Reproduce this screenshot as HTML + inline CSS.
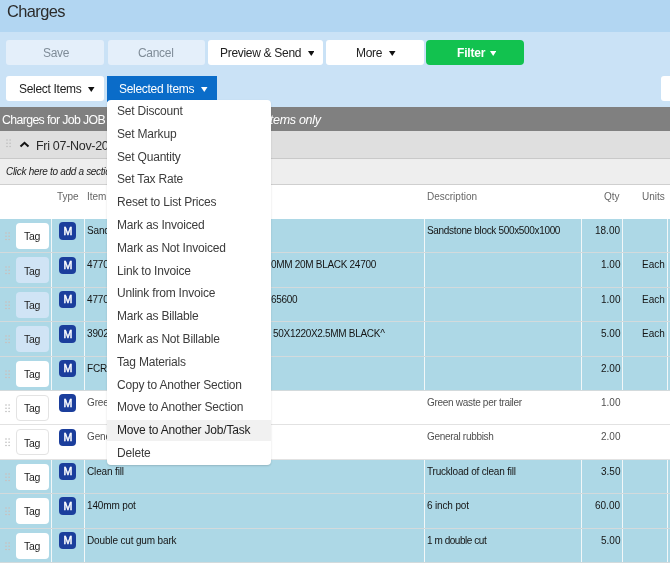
<!DOCTYPE html>
<html><head><meta charset="utf-8"><style>
html,body{margin:0;padding:0;width:670px;height:567px;overflow:hidden;background:#fff;font-family:"Liberation Sans", sans-serif}
.b{position:absolute;}
.t{position:absolute;line-height:1;white-space:nowrap;will-change:transform}
</style></head><body>
<div class="b" style="left:0px;top:0px;width:670px;height:32px;background:#B2D6F2"></div>
<div class="b" style="left:0px;top:32px;width:670px;height:74.5px;background:#CAE2F6"></div>
<div class="t " style="left:6.8px;top:3.02px;font-size:16.4px;color:#2b2b2b;letter-spacing:-0.6px">Charges</div>
<div class="b" style="left:6px;top:40px;width:98px;height:25px;background:#E4EFFA;border-radius:3px"></div>
<div class="b" style="left:108px;top:40px;width:97px;height:25px;background:#E4EFFA;border-radius:3px"></div>
<div class="b" style="left:208px;top:40px;width:115px;height:25px;background:#fff;border-radius:3px"></div>
<div class="b" style="left:326px;top:40px;width:98px;height:25px;background:#fff;border-radius:3px"></div>
<div class="b" style="left:426px;top:40px;width:98px;height:25px;background:#12C24F;border-radius:4px"></div>
<div class="t " style="left:42.5px;top:47.14px;font-size:12px;color:#7f8c98;letter-spacing:-0.3px">Save</div>
<div class="t " style="left:138px;top:47.14px;font-size:12px;color:#7f8c98;letter-spacing:-0.3px">Cancel</div>
<div class="t " style="left:220px;top:47.14px;font-size:12px;color:#222;letter-spacing:-0.3px">Preview &amp; Send</div>
<svg class="b" style="left:307.5px;top:50.5px" width="6.5" height="5.0" viewBox="0 0 6.5 5.0"><path d="M0 0H6.5L3.25 5.0Z" fill="#111"/></svg>
<div class="t " style="left:356px;top:47.14px;font-size:12px;color:#222;letter-spacing:-0.3px">More</div>
<svg class="b" style="left:389.3px;top:50.5px" width="6.5" height="5.0" viewBox="0 0 6.5 5.0"><path d="M0 0H6.5L3.25 5.0Z" fill="#111"/></svg>
<div class="t " style="left:457px;top:47.14px;font-size:12px;color:#fff;font-weight:bold;letter-spacing:-0.2px">Filter</div>
<svg class="b" style="left:489.8px;top:50.5px" width="6.399999999999977" height="5.0" viewBox="0 0 6.399999999999977 5.0"><path d="M0 0H6.399999999999977L3.1999999999999886 5.0Z" fill="#fff"/></svg>
<div class="b" style="left:6px;top:76px;width:97.5px;height:25.200000000000003px;background:#fff;border-radius:3px"></div>
<div class="t " style="left:19px;top:83.14px;font-size:12px;color:#222;letter-spacing:-0.3px">Select Items</div>
<svg class="b" style="left:88.3px;top:87px" width="6.5" height="5" viewBox="0 0 6.5 5"><path d="M0 0H6.5L3.25 5Z" fill="#111"/></svg>
<div class="b" style="left:107px;top:76px;width:110px;height:26px;background:#0A6CC9"></div>
<div class="t " style="left:119.3px;top:83.14px;font-size:12px;color:#fff;letter-spacing:-0.3px">Selected Items</div>
<svg class="b" style="left:201px;top:87px" width="6.5" height="5" viewBox="0 0 6.5 5"><path d="M0 0H6.5L3.25 5Z" fill="#fff"/></svg>
<div class="b" style="left:661px;top:76px;width:19px;height:25px;background:#fff;border-radius:3px"></div>
<div class="b" style="left:0px;top:106.5px;width:670px;height:24.19999999999999px;background:#808080"></div>
<div class="t " style="left:2px;top:113.99px;font-size:12.3px;color:#fff;letter-spacing:-0.62px">Charges for Job JOB 0012 - </div>
<div class="t " style="right:349px;text-align:right;top:113.62px;font-size:12.5px;color:#fff;font-style:italic;letter-spacing:-0.3px">Showing selected items only</div>
<div class="b" style="left:0px;top:130.7px;width:670px;height:28.5px;background:#DFDFDF;border-bottom:1px solid #C9C9C9;box-sizing:border-box"></div>
<svg class="b" style="left:4.5px;top:138px" width="10" height="12"><circle cx="2.0" cy="2.0" r="0.8" fill="#bdbdbd"/><circle cx="5.1" cy="2.0" r="0.8" fill="#bdbdbd"/><circle cx="2.0" cy="5.25" r="0.8" fill="#bdbdbd"/><circle cx="5.1" cy="5.25" r="0.8" fill="#bdbdbd"/><circle cx="2.0" cy="8.5" r="0.8" fill="#bdbdbd"/><circle cx="5.1" cy="8.5" r="0.8" fill="#bdbdbd"/></svg>
<svg class="b" style="left:19px;top:141px" width="11" height="7"><path d="M1.5 5.5L5.5 1.8L9.5 5.5" stroke="#111" stroke-width="2" fill="none"/></svg>
<div class="t " style="left:36px;top:139.62px;font-size:12.5px;color:#2a2a2a;letter-spacing:-0.3px">Fri 07-Nov-2025</div>
<div class="b" style="left:0px;top:159.2px;width:670px;height:25.5px;background:#EEEEEE;border-bottom:1px solid #CFCFCF;box-sizing:border-box"></div>
<div class="t " style="left:5.5px;top:166.73px;font-size:10px;color:#222;font-style:italic;letter-spacing:-0.3px">Click here to add a section</div>
<div class="b" style="left:0px;top:184.7px;width:670px;height:34.30000000000001px;background:#fff"></div>
<div class="t " style="left:57px;top:192.13px;font-size:10px;color:#666;">Type</div>
<div class="t " style="left:86.5px;top:192.13px;font-size:10px;color:#666;">Item</div>
<div class="t " style="left:426.5px;top:192.13px;font-size:10px;color:#666;">Description</div>
<div class="t " style="right:50px;text-align:right;top:192.13px;font-size:10px;color:#666;">Qty</div>
<div class="t " style="right:5px;text-align:right;top:192.13px;font-size:10px;color:#666;">Units</div>
<div class="b" style="left:0px;top:219.0px;width:670px;height:34.400000000000006px;background:#ADD8E6;border-bottom:1px solid #D3DADC;box-sizing:border-box"></div>
<div class="b" style="left:51px;top:219.0px;width:1px;height:33.400000000000006px;background:#F2F7F8"></div>
<div class="b" style="left:84px;top:219.0px;width:1px;height:33.400000000000006px;background:#F2F7F8"></div>
<div class="b" style="left:424px;top:219.0px;width:1px;height:33.400000000000006px;background:#F2F7F8"></div>
<div class="b" style="left:581px;top:219.0px;width:1px;height:33.400000000000006px;background:#F2F7F8"></div>
<div class="b" style="left:622px;top:219.0px;width:1px;height:33.400000000000006px;background:#F2F7F8"></div>
<div class="b" style="left:667px;top:219.0px;width:1px;height:33.400000000000006px;background:#F2F7F8"></div>
<svg class="b" style="left:4.1px;top:230.9px" width="10" height="12"><circle cx="2.0" cy="2.0" r="0.8" fill="#CDBDB8"/><circle cx="5.1" cy="2.0" r="0.8" fill="#CDBDB8"/><circle cx="2.0" cy="5.25" r="0.8" fill="#CDBDB8"/><circle cx="5.1" cy="5.25" r="0.8" fill="#CDBDB8"/><circle cx="2.0" cy="8.5" r="0.8" fill="#CDBDB8"/><circle cx="5.1" cy="8.5" r="0.8" fill="#CDBDB8"/></svg>
<div class="b" style="left:16px;top:223.0px;width:33px;height:26.0px;background:#fff;border-radius:4px"></div>
<div class="t " style="left:31.8px;top:231.11px;font-size:10.5px;color:#222;width:0;display:flex;justify-content:center;letter-spacing:-0.3px">Tag</div>
<div class="b" style="left:59.2px;top:222.1px;width:16.700000000000003px;height:17.5px;background:#1B3E9C;border-radius:4px"></div>
<div class="t " style="left:67.9px;top:225.63px;font-size:10.6px;color:#fff;-webkit-text-stroke:0.45px #fff;width:0;display:flex;justify-content:center">M</div>
<div class="t " style="left:87px;top:226.03px;font-size:10px;color:#151515;letter-spacing:-0.15px">Sandstone block</div>
<div class="t " style="left:427px;top:226.03px;font-size:10px;color:#151515;letter-spacing:-0.33px">Sandstone block 500x500x1000</div>
<div class="t " style="right:50px;text-align:right;top:226.03px;font-size:10px;color:#151515;">18.00</div>
<div class="b" style="left:0px;top:253.4px;width:670px;height:34.400000000000006px;background:#ADD8E6;border-bottom:1px solid #D3DADC;box-sizing:border-box"></div>
<div class="b" style="left:51px;top:253.4px;width:1px;height:33.400000000000006px;background:#F2F7F8"></div>
<div class="b" style="left:84px;top:253.4px;width:1px;height:33.400000000000006px;background:#F2F7F8"></div>
<div class="b" style="left:424px;top:253.4px;width:1px;height:33.400000000000006px;background:#F2F7F8"></div>
<div class="b" style="left:581px;top:253.4px;width:1px;height:33.400000000000006px;background:#F2F7F8"></div>
<div class="b" style="left:622px;top:253.4px;width:1px;height:33.400000000000006px;background:#F2F7F8"></div>
<div class="b" style="left:667px;top:253.4px;width:1px;height:33.400000000000006px;background:#F2F7F8"></div>
<svg class="b" style="left:4.1px;top:265.3px" width="10" height="12"><circle cx="2.0" cy="2.0" r="0.8" fill="#CDBDB8"/><circle cx="5.1" cy="2.0" r="0.8" fill="#CDBDB8"/><circle cx="2.0" cy="5.25" r="0.8" fill="#CDBDB8"/><circle cx="5.1" cy="5.25" r="0.8" fill="#CDBDB8"/><circle cx="2.0" cy="8.5" r="0.8" fill="#CDBDB8"/><circle cx="5.1" cy="8.5" r="0.8" fill="#CDBDB8"/></svg>
<div class="b" style="left:16px;top:257.4px;width:33px;height:26.0px;background:#D0E4F5;border-radius:4px"></div>
<div class="t " style="left:31.8px;top:265.51px;font-size:10.5px;color:#222;width:0;display:flex;justify-content:center;letter-spacing:-0.3px">Tag</div>
<div class="b" style="left:59.2px;top:256.5px;width:16.700000000000003px;height:17.5px;background:#1B3E9C;border-radius:4px"></div>
<div class="t " style="left:67.9px;top:260.03px;font-size:10.6px;color:#fff;-webkit-text-stroke:0.45px #fff;width:0;display:flex;justify-content:center">M</div>
<div class="t " style="left:87px;top:260.44px;font-size:10px;color:#151515;letter-spacing:-0.15px">4770</div>
<div class="t " style="left:271px;top:260.44px;font-size:10px;color:#151515;letter-spacing:-0.3px">0MM 20M BLACK 24700</div>
<div class="t " style="left:427px;top:260.44px;font-size:10px;color:#151515;letter-spacing:-0.15px"></div>
<div class="t " style="right:50px;text-align:right;top:260.44px;font-size:10px;color:#151515;">1.00</div>
<div class="t " style="right:5px;text-align:right;top:260.44px;font-size:10px;color:#151515;">Each</div>
<div class="b" style="left:0px;top:287.8px;width:670px;height:34.39999999999998px;background:#ADD8E6;border-bottom:1px solid #D3DADC;box-sizing:border-box"></div>
<div class="b" style="left:51px;top:287.8px;width:1px;height:33.39999999999998px;background:#F2F7F8"></div>
<div class="b" style="left:84px;top:287.8px;width:1px;height:33.39999999999998px;background:#F2F7F8"></div>
<div class="b" style="left:424px;top:287.8px;width:1px;height:33.39999999999998px;background:#F2F7F8"></div>
<div class="b" style="left:581px;top:287.8px;width:1px;height:33.39999999999998px;background:#F2F7F8"></div>
<div class="b" style="left:622px;top:287.8px;width:1px;height:33.39999999999998px;background:#F2F7F8"></div>
<div class="b" style="left:667px;top:287.8px;width:1px;height:33.39999999999998px;background:#F2F7F8"></div>
<svg class="b" style="left:4.1px;top:299.7px" width="10" height="12"><circle cx="2.0" cy="2.0" r="0.8" fill="#CDBDB8"/><circle cx="5.1" cy="2.0" r="0.8" fill="#CDBDB8"/><circle cx="2.0" cy="5.25" r="0.8" fill="#CDBDB8"/><circle cx="5.1" cy="5.25" r="0.8" fill="#CDBDB8"/><circle cx="2.0" cy="8.5" r="0.8" fill="#CDBDB8"/><circle cx="5.1" cy="8.5" r="0.8" fill="#CDBDB8"/></svg>
<div class="b" style="left:16px;top:291.8px;width:33px;height:26.0px;background:#D0E4F5;border-radius:4px"></div>
<div class="t " style="left:31.8px;top:299.91px;font-size:10.5px;color:#222;width:0;display:flex;justify-content:center;letter-spacing:-0.3px">Tag</div>
<div class="b" style="left:59.2px;top:290.90000000000003px;width:16.700000000000003px;height:17.5px;background:#1B3E9C;border-radius:4px"></div>
<div class="t " style="left:67.9px;top:294.43px;font-size:10.6px;color:#fff;-webkit-text-stroke:0.45px #fff;width:0;display:flex;justify-content:center">M</div>
<div class="t " style="left:87px;top:294.84px;font-size:10px;color:#151515;letter-spacing:-0.15px">4770</div>
<div class="t " style="left:271px;top:294.84px;font-size:10px;color:#151515;letter-spacing:-0.3px">65600</div>
<div class="t " style="left:427px;top:294.84px;font-size:10px;color:#151515;letter-spacing:-0.15px"></div>
<div class="t " style="right:50px;text-align:right;top:294.84px;font-size:10px;color:#151515;">1.00</div>
<div class="t " style="right:5px;text-align:right;top:294.84px;font-size:10px;color:#151515;">Each</div>
<div class="b" style="left:0px;top:322.2px;width:670px;height:34.39999999999998px;background:#ADD8E6;border-bottom:1px solid #D3DADC;box-sizing:border-box"></div>
<div class="b" style="left:51px;top:322.2px;width:1px;height:33.39999999999998px;background:#F2F7F8"></div>
<div class="b" style="left:84px;top:322.2px;width:1px;height:33.39999999999998px;background:#F2F7F8"></div>
<div class="b" style="left:424px;top:322.2px;width:1px;height:33.39999999999998px;background:#F2F7F8"></div>
<div class="b" style="left:581px;top:322.2px;width:1px;height:33.39999999999998px;background:#F2F7F8"></div>
<div class="b" style="left:622px;top:322.2px;width:1px;height:33.39999999999998px;background:#F2F7F8"></div>
<div class="b" style="left:667px;top:322.2px;width:1px;height:33.39999999999998px;background:#F2F7F8"></div>
<svg class="b" style="left:4.1px;top:334.09999999999997px" width="10" height="12"><circle cx="2.0" cy="2.0" r="0.8" fill="#CDBDB8"/><circle cx="5.1" cy="2.0" r="0.8" fill="#CDBDB8"/><circle cx="2.0" cy="5.25" r="0.8" fill="#CDBDB8"/><circle cx="5.1" cy="5.25" r="0.8" fill="#CDBDB8"/><circle cx="2.0" cy="8.5" r="0.8" fill="#CDBDB8"/><circle cx="5.1" cy="8.5" r="0.8" fill="#CDBDB8"/></svg>
<div class="b" style="left:16px;top:326.2px;width:33px;height:26.0px;background:#D0E4F5;border-radius:4px"></div>
<div class="t " style="left:31.8px;top:334.31px;font-size:10.5px;color:#222;width:0;display:flex;justify-content:center;letter-spacing:-0.3px">Tag</div>
<div class="b" style="left:59.2px;top:325.3px;width:16.700000000000003px;height:17.5px;background:#1B3E9C;border-radius:4px"></div>
<div class="t " style="left:67.9px;top:328.83px;font-size:10.6px;color:#fff;-webkit-text-stroke:0.45px #fff;width:0;display:flex;justify-content:center">M</div>
<div class="t " style="left:87px;top:329.24px;font-size:10px;color:#151515;letter-spacing:-0.15px">3902</div>
<div class="t " style="left:272.5px;top:329.24px;font-size:10px;color:#151515;letter-spacing:-0.3px">50X1220X2.5MM BLACK^</div>
<div class="t " style="left:427px;top:329.24px;font-size:10px;color:#151515;letter-spacing:-0.15px"></div>
<div class="t " style="right:50px;text-align:right;top:329.24px;font-size:10px;color:#151515;">5.00</div>
<div class="t " style="right:5px;text-align:right;top:329.24px;font-size:10px;color:#151515;">Each</div>
<div class="b" style="left:0px;top:356.6px;width:670px;height:34.39999999999998px;background:#ADD8E6;border-bottom:1px solid #D3DADC;box-sizing:border-box"></div>
<div class="b" style="left:51px;top:356.6px;width:1px;height:33.39999999999998px;background:#F2F7F8"></div>
<div class="b" style="left:84px;top:356.6px;width:1px;height:33.39999999999998px;background:#F2F7F8"></div>
<div class="b" style="left:424px;top:356.6px;width:1px;height:33.39999999999998px;background:#F2F7F8"></div>
<div class="b" style="left:581px;top:356.6px;width:1px;height:33.39999999999998px;background:#F2F7F8"></div>
<div class="b" style="left:622px;top:356.6px;width:1px;height:33.39999999999998px;background:#F2F7F8"></div>
<div class="b" style="left:667px;top:356.6px;width:1px;height:33.39999999999998px;background:#F2F7F8"></div>
<svg class="b" style="left:4.1px;top:368.5px" width="10" height="12"><circle cx="2.0" cy="2.0" r="0.8" fill="#CDBDB8"/><circle cx="5.1" cy="2.0" r="0.8" fill="#CDBDB8"/><circle cx="2.0" cy="5.25" r="0.8" fill="#CDBDB8"/><circle cx="5.1" cy="5.25" r="0.8" fill="#CDBDB8"/><circle cx="2.0" cy="8.5" r="0.8" fill="#CDBDB8"/><circle cx="5.1" cy="8.5" r="0.8" fill="#CDBDB8"/></svg>
<div class="b" style="left:16px;top:360.6px;width:33px;height:26.0px;background:#fff;border-radius:4px"></div>
<div class="t " style="left:31.8px;top:368.71px;font-size:10.5px;color:#222;width:0;display:flex;justify-content:center;letter-spacing:-0.3px">Tag</div>
<div class="b" style="left:59.2px;top:359.70000000000005px;width:16.700000000000003px;height:17.5px;background:#1B3E9C;border-radius:4px"></div>
<div class="t " style="left:67.9px;top:363.23px;font-size:10.6px;color:#fff;-webkit-text-stroke:0.45px #fff;width:0;display:flex;justify-content:center">M</div>
<div class="t " style="left:87px;top:363.64px;font-size:10px;color:#151515;letter-spacing:-0.15px">FCR</div>
<div class="t " style="left:427px;top:363.64px;font-size:10px;color:#151515;letter-spacing:-0.15px"></div>
<div class="t " style="right:50px;text-align:right;top:363.64px;font-size:10px;color:#151515;">2.00</div>
<div class="b" style="left:0px;top:391.0px;width:670px;height:34.39999999999998px;background:#fff;border-bottom:1px solid #E2E2E2;box-sizing:border-box"></div>
<svg class="b" style="left:4.1px;top:402.9px" width="10" height="12"><circle cx="2.0" cy="2.0" r="0.8" fill="#bbb"/><circle cx="5.1" cy="2.0" r="0.8" fill="#bbb"/><circle cx="2.0" cy="5.25" r="0.8" fill="#bbb"/><circle cx="5.1" cy="5.25" r="0.8" fill="#bbb"/><circle cx="2.0" cy="8.5" r="0.8" fill="#bbb"/><circle cx="5.1" cy="8.5" r="0.8" fill="#bbb"/></svg>
<div class="b" style="left:16px;top:395.0px;width:33px;height:26.0px;background:#fff;border:1px solid #E3E3E3;border-radius:4px;box-sizing:border-box"></div>
<div class="t " style="left:31.8px;top:403.11px;font-size:10.5px;color:#222;width:0;display:flex;justify-content:center;letter-spacing:-0.3px">Tag</div>
<div class="b" style="left:59.2px;top:394.1px;width:16.700000000000003px;height:17.5px;background:#1B3E9C;border-radius:4px"></div>
<div class="t " style="left:67.9px;top:397.63px;font-size:10.6px;color:#fff;-webkit-text-stroke:0.45px #fff;width:0;display:flex;justify-content:center">M</div>
<div class="t " style="left:87px;top:398.04px;font-size:10px;color:#505050;letter-spacing:-0.15px">Green waste</div>
<div class="t " style="left:427px;top:398.04px;font-size:10px;color:#505050;letter-spacing:-0.3px">Green waste per trailer</div>
<div class="t " style="right:50px;text-align:right;top:398.04px;font-size:10px;color:#505050;">1.00</div>
<div class="b" style="left:0px;top:425.4px;width:670px;height:34.39999999999998px;background:#fff;border-bottom:1px solid #E2E2E2;box-sizing:border-box"></div>
<svg class="b" style="left:4.1px;top:437.29999999999995px" width="10" height="12"><circle cx="2.0" cy="2.0" r="0.8" fill="#bbb"/><circle cx="5.1" cy="2.0" r="0.8" fill="#bbb"/><circle cx="2.0" cy="5.25" r="0.8" fill="#bbb"/><circle cx="5.1" cy="5.25" r="0.8" fill="#bbb"/><circle cx="2.0" cy="8.5" r="0.8" fill="#bbb"/><circle cx="5.1" cy="8.5" r="0.8" fill="#bbb"/></svg>
<div class="b" style="left:16px;top:429.4px;width:33px;height:26.0px;background:#fff;border:1px solid #E3E3E3;border-radius:4px;box-sizing:border-box"></div>
<div class="t " style="left:31.8px;top:437.51px;font-size:10.5px;color:#222;width:0;display:flex;justify-content:center;letter-spacing:-0.3px">Tag</div>
<div class="b" style="left:59.2px;top:428.5px;width:16.700000000000003px;height:17.5px;background:#1B3E9C;border-radius:4px"></div>
<div class="t " style="left:67.9px;top:432.03px;font-size:10.6px;color:#fff;-webkit-text-stroke:0.45px #fff;width:0;display:flex;justify-content:center">M</div>
<div class="t " style="left:87px;top:432.44px;font-size:10px;color:#505050;letter-spacing:-0.15px">General rubbish</div>
<div class="t " style="left:427px;top:432.44px;font-size:10px;color:#505050;letter-spacing:-0.31px">General rubbish</div>
<div class="t " style="right:50px;text-align:right;top:432.44px;font-size:10px;color:#505050;">2.00</div>
<div class="b" style="left:0px;top:459.79999999999995px;width:670px;height:34.39999999999998px;background:#ADD8E6;border-bottom:1px solid #D3DADC;box-sizing:border-box"></div>
<div class="b" style="left:51px;top:459.79999999999995px;width:1px;height:33.39999999999998px;background:#F2F7F8"></div>
<div class="b" style="left:84px;top:459.79999999999995px;width:1px;height:33.39999999999998px;background:#F2F7F8"></div>
<div class="b" style="left:424px;top:459.79999999999995px;width:1px;height:33.39999999999998px;background:#F2F7F8"></div>
<div class="b" style="left:581px;top:459.79999999999995px;width:1px;height:33.39999999999998px;background:#F2F7F8"></div>
<div class="b" style="left:622px;top:459.79999999999995px;width:1px;height:33.39999999999998px;background:#F2F7F8"></div>
<div class="b" style="left:667px;top:459.79999999999995px;width:1px;height:33.39999999999998px;background:#F2F7F8"></div>
<svg class="b" style="left:4.1px;top:471.69999999999993px" width="10" height="12"><circle cx="2.0" cy="2.0" r="0.8" fill="#CDBDB8"/><circle cx="5.1" cy="2.0" r="0.8" fill="#CDBDB8"/><circle cx="2.0" cy="5.25" r="0.8" fill="#CDBDB8"/><circle cx="5.1" cy="5.25" r="0.8" fill="#CDBDB8"/><circle cx="2.0" cy="8.5" r="0.8" fill="#CDBDB8"/><circle cx="5.1" cy="8.5" r="0.8" fill="#CDBDB8"/></svg>
<div class="b" style="left:16px;top:463.79999999999995px;width:33px;height:26.0px;background:#fff;border-radius:4px"></div>
<div class="t " style="left:31.8px;top:471.91px;font-size:10.5px;color:#222;width:0;display:flex;justify-content:center;letter-spacing:-0.3px">Tag</div>
<div class="b" style="left:59.2px;top:462.9px;width:16.700000000000003px;height:17.5px;background:#1B3E9C;border-radius:4px"></div>
<div class="t " style="left:67.9px;top:466.43px;font-size:10.6px;color:#fff;-webkit-text-stroke:0.45px #fff;width:0;display:flex;justify-content:center">M</div>
<div class="t " style="left:87px;top:466.83px;font-size:10px;color:#151515;letter-spacing:-0.15px">Clean fill</div>
<div class="t " style="left:427px;top:466.83px;font-size:10px;color:#151515;letter-spacing:-0.21px">Truckload of clean fill</div>
<div class="t " style="right:50px;text-align:right;top:466.83px;font-size:10px;color:#151515;">3.50</div>
<div class="b" style="left:0px;top:494.2px;width:670px;height:34.400000000000034px;background:#ADD8E6;border-bottom:1px solid #D3DADC;box-sizing:border-box"></div>
<div class="b" style="left:51px;top:494.2px;width:1px;height:33.400000000000034px;background:#F2F7F8"></div>
<div class="b" style="left:84px;top:494.2px;width:1px;height:33.400000000000034px;background:#F2F7F8"></div>
<div class="b" style="left:424px;top:494.2px;width:1px;height:33.400000000000034px;background:#F2F7F8"></div>
<div class="b" style="left:581px;top:494.2px;width:1px;height:33.400000000000034px;background:#F2F7F8"></div>
<div class="b" style="left:622px;top:494.2px;width:1px;height:33.400000000000034px;background:#F2F7F8"></div>
<div class="b" style="left:667px;top:494.2px;width:1px;height:33.400000000000034px;background:#F2F7F8"></div>
<svg class="b" style="left:4.1px;top:506.09999999999997px" width="10" height="12"><circle cx="2.0" cy="2.0" r="0.8" fill="#CDBDB8"/><circle cx="5.1" cy="2.0" r="0.8" fill="#CDBDB8"/><circle cx="2.0" cy="5.25" r="0.8" fill="#CDBDB8"/><circle cx="5.1" cy="5.25" r="0.8" fill="#CDBDB8"/><circle cx="2.0" cy="8.5" r="0.8" fill="#CDBDB8"/><circle cx="5.1" cy="8.5" r="0.8" fill="#CDBDB8"/></svg>
<div class="b" style="left:16px;top:498.2px;width:33px;height:26.000000000000057px;background:#fff;border-radius:4px"></div>
<div class="t " style="left:31.8px;top:506.31px;font-size:10.5px;color:#222;width:0;display:flex;justify-content:center;letter-spacing:-0.3px">Tag</div>
<div class="b" style="left:59.2px;top:497.3px;width:16.700000000000003px;height:17.499999999999943px;background:#1B3E9C;border-radius:4px"></div>
<div class="t " style="left:67.9px;top:500.83px;font-size:10.6px;color:#fff;-webkit-text-stroke:0.45px #fff;width:0;display:flex;justify-content:center">M</div>
<div class="t " style="left:87px;top:501.24px;font-size:10px;color:#151515;letter-spacing:-0.15px">140mm pot</div>
<div class="t " style="left:427px;top:501.24px;font-size:10px;color:#151515;letter-spacing:-0.15px">6 inch pot</div>
<div class="t " style="right:50px;text-align:right;top:501.24px;font-size:10px;color:#151515;">60.00</div>
<div class="b" style="left:0px;top:528.5999999999999px;width:670px;height:34.39999999999998px;background:#ADD8E6;border-bottom:1px solid #D3DADC;box-sizing:border-box"></div>
<div class="b" style="left:51px;top:528.5999999999999px;width:1px;height:33.39999999999998px;background:#F2F7F8"></div>
<div class="b" style="left:84px;top:528.5999999999999px;width:1px;height:33.39999999999998px;background:#F2F7F8"></div>
<div class="b" style="left:424px;top:528.5999999999999px;width:1px;height:33.39999999999998px;background:#F2F7F8"></div>
<div class="b" style="left:581px;top:528.5999999999999px;width:1px;height:33.39999999999998px;background:#F2F7F8"></div>
<div class="b" style="left:622px;top:528.5999999999999px;width:1px;height:33.39999999999998px;background:#F2F7F8"></div>
<div class="b" style="left:667px;top:528.5999999999999px;width:1px;height:33.39999999999998px;background:#F2F7F8"></div>
<svg class="b" style="left:4.1px;top:540.4999999999999px" width="10" height="12"><circle cx="2.0" cy="2.0" r="0.8" fill="#CDBDB8"/><circle cx="5.1" cy="2.0" r="0.8" fill="#CDBDB8"/><circle cx="2.0" cy="5.25" r="0.8" fill="#CDBDB8"/><circle cx="5.1" cy="5.25" r="0.8" fill="#CDBDB8"/><circle cx="2.0" cy="8.5" r="0.8" fill="#CDBDB8"/><circle cx="5.1" cy="8.5" r="0.8" fill="#CDBDB8"/></svg>
<div class="b" style="left:16px;top:532.5999999999999px;width:33px;height:26.0px;background:#fff;border-radius:4px"></div>
<div class="t " style="left:31.8px;top:540.71px;font-size:10.5px;color:#222;width:0;display:flex;justify-content:center;letter-spacing:-0.3px">Tag</div>
<div class="b" style="left:59.2px;top:531.6999999999999px;width:16.700000000000003px;height:17.5px;background:#1B3E9C;border-radius:4px"></div>
<div class="t " style="left:67.9px;top:535.23px;font-size:10.6px;color:#fff;-webkit-text-stroke:0.45px #fff;width:0;display:flex;justify-content:center">M</div>
<div class="t " style="left:87px;top:535.63px;font-size:10px;color:#151515;letter-spacing:-0.15px">Double cut gum bark</div>
<div class="t " style="left:427px;top:535.63px;font-size:10px;color:#151515;letter-spacing:-0.45px">1 m double cut</div>
<div class="t " style="right:50px;text-align:right;top:535.63px;font-size:10px;color:#151515;">5.00</div>
<div class="b" style="left:107px;top:100px;width:164px;height:365px;background:#fff;border-radius:4px;box-shadow:0 1px 2px rgba(0,0,0,0.16)"></div>
<div class="t " style="left:117px;top:105.04px;font-size:12px;color:#3c3c3c;letter-spacing:-0.2px">Set Discount</div>
<div class="t " style="left:117px;top:127.84px;font-size:12px;color:#3c3c3c;letter-spacing:-0.2px">Set Markup</div>
<div class="t " style="left:117px;top:150.64px;font-size:12px;color:#3c3c3c;letter-spacing:-0.2px">Set Quantity</div>
<div class="t " style="left:117px;top:173.44px;font-size:12px;color:#3c3c3c;letter-spacing:-0.2px">Set Tax Rate</div>
<div class="t " style="left:117px;top:196.24px;font-size:12px;color:#3c3c3c;letter-spacing:-0.2px">Reset to List Prices</div>
<div class="t " style="left:117px;top:219.04px;font-size:12px;color:#3c3c3c;letter-spacing:-0.2px">Mark as Invoiced</div>
<div class="t " style="left:117px;top:241.84px;font-size:12px;color:#3c3c3c;letter-spacing:-0.2px">Mark as Not Invoiced</div>
<div class="t " style="left:117px;top:264.64px;font-size:12px;color:#3c3c3c;letter-spacing:-0.2px">Link to Invoice</div>
<div class="t " style="left:117px;top:287.44px;font-size:12px;color:#3c3c3c;letter-spacing:-0.2px">Unlink from Invoice</div>
<div class="t " style="left:117px;top:310.24px;font-size:12px;color:#3c3c3c;letter-spacing:-0.2px">Mark as Billable</div>
<div class="t " style="left:117px;top:333.04px;font-size:12px;color:#3c3c3c;letter-spacing:-0.2px">Mark as Not Billable</div>
<div class="t " style="left:117px;top:355.84px;font-size:12px;color:#3c3c3c;letter-spacing:-0.2px">Tag Materials</div>
<div class="t " style="left:117px;top:378.64px;font-size:12px;color:#3c3c3c;letter-spacing:-0.2px">Copy to Another Section</div>
<div class="t " style="left:117px;top:401.44px;font-size:12px;color:#3c3c3c;letter-spacing:-0.2px">Move to Another Section</div>
<div class="b" style="left:107px;top:420.0px;width:164px;height:21.399999999999977px;background:#F1F1F1"></div>
<div class="t " style="left:117px;top:424.24px;font-size:12px;color:#222;letter-spacing:-0.2px">Move to Another Job/Task</div>
<div class="t " style="left:117px;top:447.04px;font-size:12px;color:#3c3c3c;letter-spacing:-0.2px">Delete</div>

</body></html>
